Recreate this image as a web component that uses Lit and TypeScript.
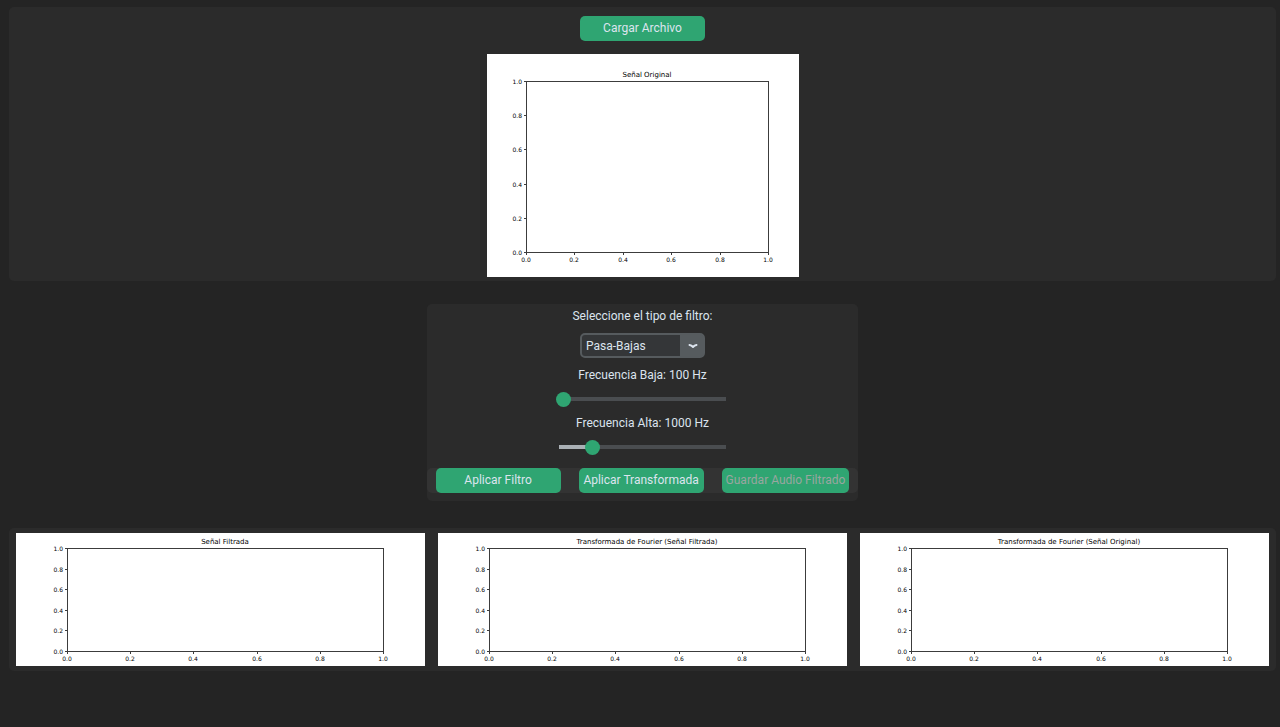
import { LitElement, html, svg, css } from "lit";
import { customElement, property, state } from "lit/decorators.js";

const TICKS = [0, 0.2, 0.4, 0.6, 0.8, 1];

interface Plot {
  width: number;
  height: number;
  left: number;
  right: number;
  top: number;
  bottom: number;
}

const LARGE: Plot = { width: 312, height: 223, left: 39, right: 281, top: 27, bottom: 198 };
const WIDE: Plot = { width: 409, height: 133, left: 51, right: 367, top: 15, bottom: 118 };

/** Empty axes with a title and ticks from 0 to 1. */
@customElement("signal-plot")
export class SignalPlot extends LitElement {
  @property() heading = "";
  @property({ attribute: false }) plot: Plot = LARGE;

  static styles = css`
    :host {
      display: block;
    }
    .figure {
      display: block;
      width: 100%;
      height: auto;
      background: #ffffff;
      font-family: "DejaVu Sans", sans-serif;
      font-size: 6px;
    }
    .title {
      font-size: 7px;
    }
    .axes {
      fill: none;
      stroke: #3c3c3c;
      stroke-width: 1;
    }
  `;

  render() {
    const p = this.plot;
    const middle = (p.left + p.right) / 2;
    return html`
      <svg class="figure" viewBox="0 0 ${p.width} ${p.height}" role="img" aria-label=${this.heading}>
        <text class="title" x=${middle} y=${p.top - 4} text-anchor="middle">${this.heading}</text>
        <rect class="axes" x=${p.left + 0.5} y=${p.top + 0.5}
          width=${p.right - p.left} height=${p.bottom - p.top}></rect>
        ${TICKS.map((t) => {
          const x = Math.round(p.left + t * (p.right - p.left));
          const y = Math.round(p.bottom - t * (p.bottom - p.top));
          return svg`
            <path class="axes" d="M${x + 0.5} ${p.bottom + 1}v2M${p.left - 2} ${y + 0.5}h2"></path>
            <text x=${x} y=${p.bottom + 10} text-anchor="middle">${t.toFixed(1)}</text>
            <text x=${p.left - 4} y=${y + 3} text-anchor="end">${t.toFixed(1)}</text>
          `;
        })}
      </svg>
    `;
  }
}

@customElement("app-root")
export class AppRoot extends LitElement {
  @state() private low = 100;
  @state() private high = 1000;

  private readonly min = 100;
  private readonly max = 5000;

  static styles = css`
    :host {
      display: flex;
      flex-direction: column;
      align-items: center;
      box-sizing: border-box;
      min-height: 100vh;
      padding: 7px 4px 7px 9px;
      background: #242424;
      color: #dce4ee;
      font-family: Roboto, sans-serif;
      font-size: 12px;
      line-height: 16px;
    }
    .panel {
      box-sizing: border-box;
      border-radius: 5px;
      background: #2b2b2b;
    }
    .source {
      display: flex;
      flex-direction: column;
      align-items: center;
      gap: 13px;
      width: 100%;
      padding: 9px 0 4px;
    }
    .preview {
      width: 312px;
    }
    .filter {
      display: flex;
      flex-direction: column;
      align-items: center;
      margin: 23px 0 27px;
      padding: 4px 0 8px;
    }
    .button {
      box-sizing: border-box;
      min-width: 125px;
      height: 25px;
      padding: 0 4px 2px;
      border: 0;
      border-radius: 5px;
      background: #2fa572;
      color: #dce4ee;
      font: inherit;
    }
    .button:disabled {
      color: #99a6a0;
    }
    .picker {
      display: grid;
      width: 125px;
      margin: 9px 0;
    }
    .select {
      grid-area: 1 / 1;
      appearance: none;
      height: 25px;
      padding: 0 26px 0 4px;
      border: 2px solid #565b5e;
      border-radius: 5px;
      background: linear-gradient(#565b5e, #565b5e) right / 23px 100% no-repeat #343638;
      color: #dce4ee;
      font: inherit;
    }
    .chevron {
      grid-area: 1 / 1;
      place-self: center end;
      width: 10px;
      height: 6px;
      margin-right: 7px;
      fill: none;
      stroke: #dce4ee;
      stroke-width: 2;
      stroke-linecap: round;
      stroke-linejoin: round;
      pointer-events: none;
    }
    .slider {
      appearance: none;
      width: 173px;
      height: 16px;
      margin: 8px 0;
      background:
        linear-gradient(#aab0b5, #aab0b5) 3px center / var(--fill) 4px no-repeat,
        linear-gradient(#4a4d50, #4a4d50) center / calc(100% - 6px) 4px no-repeat;
    }
    .slider::-webkit-slider-thumb {
      appearance: none;
      width: 15px;
      height: 15px;
      border-radius: 50%;
      background: #2fa572;
    }
    .actions {
      display: flex;
      gap: 18px;
      margin-top: 5px;
      padding: 0 9px;
      border-radius: 5px;
      background: #333333;
    }
    .results {
      display: grid;
      grid-template-columns: repeat(3, 1fr);
      gap: 13px;
      width: 100%;
      padding: 5px 7px;
    }
  `;

  private fill(value: number) {
    const ratio = (value - this.min) / (this.max - this.min);
    return `--fill: ${(ratio * 100).toFixed(1)}%`;
  }

  render() {
    return html`
      <section class="panel source">
        <button class="button" type="button">Cargar Archivo</button>
        <signal-plot class="preview" heading="Señal Original" .plot=${LARGE}></signal-plot>
      </section>

      <section class="panel filter">
        <label for="kind">Seleccione el tipo de filtro:</label>
        <div class="picker">
          <select class="select" id="kind">
            <option>Pasa-Bajas</option>
            <option>Pasa-Altas</option>
            <option>Pasa-Banda</option>
          </select>
          <svg class="chevron" viewBox="0 0 10 6" aria-hidden="true">
            <path d="M1.5 2Q3.5 2.4 5 4Q6.5 2.4 8.5 2"></path>
          </svg>
        </div>
        <label for="low">Frecuencia Baja: ${this.low} Hz</label>
        <input class="slider" id="low" type="range" min=${this.min} max=${this.max}
          .value=${String(this.low)} style=${this.fill(this.low)}
          @input=${(e: Event) => (this.low = Number((e.target as HTMLInputElement).value))} />
        <label for="high">Frecuencia Alta: ${this.high} Hz</label>
        <input class="slider" id="high" type="range" min=${this.min} max=${this.max}
          .value=${String(this.high)} style=${this.fill(this.high)}
          @input=${(e: Event) => (this.high = Number((e.target as HTMLInputElement).value))} />
        <div class="actions">
          <button class="button" type="button">Aplicar Filtro</button>
          <button class="button" type="button">Aplicar Transformada</button>
          <button class="button" type="button" disabled>Guardar Audio Filtrado</button>
        </div>
      </section>

      <section class="panel results">
        <signal-plot heading="Señal Filtrada" .plot=${WIDE}></signal-plot>
        <signal-plot heading="Transformada de Fourier (Señal Filtrada)" .plot=${WIDE}></signal-plot>
        <signal-plot heading="Transformada de Fourier (Señal Original)" .plot=${WIDE}></signal-plot>
      </section>
    `;
  }
}
